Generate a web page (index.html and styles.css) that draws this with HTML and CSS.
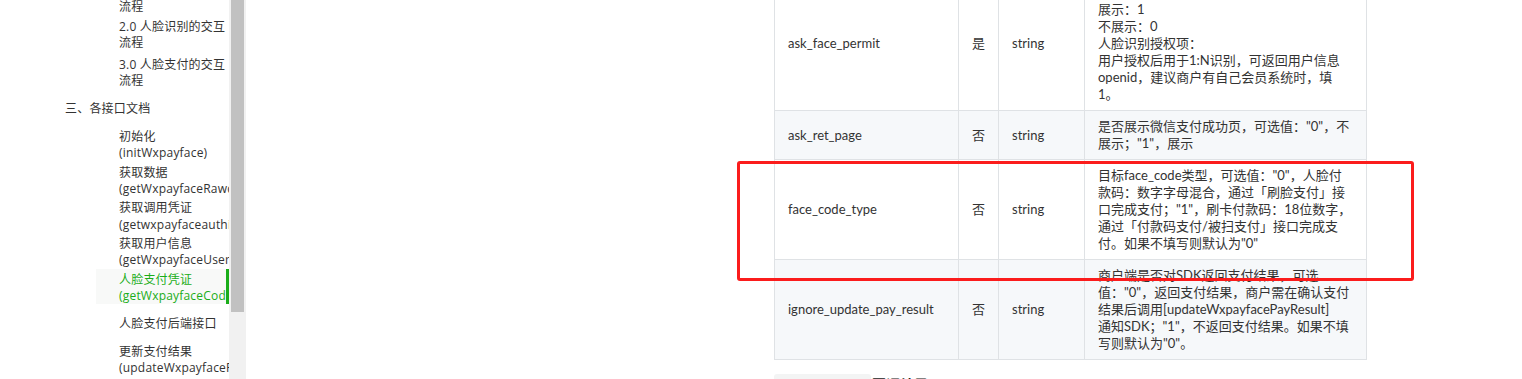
FILE: index.html
```html
<!DOCTYPE html>
<html lang="zh-CN">
<head>
<meta charset="utf-8">
<title>人脸支付接口文档</title>
<link rel="stylesheet" href="styles.css">
</head>
<body>
<div class="page">
  <aside class="sidebar">
    <nav class="side-content">
      <ul class="toc">
        <li class="toc-item sub">1.0 刷脸设备的交互<br>流程</li>
        <li class="toc-item sub">2.0 人脸识别的交互<br>流程</li>
        <li class="toc-item sub loose">3.0 人脸支付的交互<br>流程</li>
        <li class="toc-item section">三、各接口文档</li>
        <li class="toc-item sub spaced">初始化<br>(initWxpayface)</li>
        <li class="toc-item sub api">获取数据<br>(getWxpayfaceRawdata)</li>
        <li class="toc-item sub api">获取调用凭证<br>(getwxpayfaceauthinfo)</li>
        <li class="toc-item sub api">获取用户信息<br>(getWxpayfaceUserInfo)</li>
        <li class="toc-item sub active">人脸支付凭证<br>(getWxpayfaceCode)</li>
        <li class="toc-item sub spaced">人脸支付后端接口</li>
        <li class="toc-item sub spaced">更新支付结果<br>(updateWxpayfacePayResult)</li>
      </ul>
    </nav>
    <div class="scrollbar"><div class="thumb"></div></div>
  </aside>

  <main class="main">
    <div class="doc">
      <table class="params">
        <colgroup>
          <col class="c-key">
          <col class="c-req">
          <col class="c-type">
          <col class="c-desc">
        </colgroup>
        <tbody>
          <tr>
            <td class="key">ask_face_permit</td>
            <td class="req">是</td>
            <td class="type">string</td>
            <td class="desc">是否展示人脸识别授权项：<br>展示：1<br>不展示：0<br>人脸识别授权项：<br>用户授权后用于1:N识别，可返回用户信息<br>openid，建议商户有自己会员系统时，填<br>1。</td>
          </tr>
          <tr class="alt">
            <td class="key">ask_ret_page</td>
            <td class="req">否</td>
            <td class="type">string</td>
            <td class="desc">是否展示微信支付成功页，可选值："0"，不<br>展示；"1"，展示</td>
          </tr>
          <tr>
            <td class="key">face_code_type</td>
            <td class="req">否</td>
            <td class="type">string</td>
            <td class="desc">目标face_code类型，可选值："0"，人脸付<br>款码：数字字母混合，通过「刷脸支付」接<br>口完成支付；"1"，刷卡付款码：18位数字，<br>通过「付款码支付/被扫支付」接口完成支<br>付。如果不填写则默认为"0"</td>
          </tr>
          <tr class="alt">
            <td class="key">ignore_update_pay_result</td>
            <td class="req">否</td>
            <td class="type">string</td>
            <td class="desc">商户端是否对SDK返回支付结果，可选<br>值："0"，返回支付结果，商户需在确认支付<br>结果后调用[updateWxpayfacePayResult]<br>通知SDK；"1"，不返回支付结果。如果不填<br>写则默认为"0"。</td>
          </tr>
        </tbody>
      </table>
      <p class="next"><code class="inline-code">response</code>回调结果</p>
    </div>
  </main>
</div>
<div class="annotation"></div>
</body>
</html>
```

FILE: styles.css
```css
* {
  box-sizing: border-box;
}

html, body {
  margin: 0;
  padding: 0;
  background: #ffffff;
}

body {
  font-family: "Lato", "Noto Sans CJK SC", sans-serif;
  color: #333333;
  position: relative;
  height: 379px;
  overflow: hidden;
}

.page {
  display: flex;
  height: 379px;
  overflow: hidden;
}

/* ---------- sidebar ---------- */
.sidebar {
  display: flex;
  flex: 0 0 246px;
  height: 379px;
}

.side-content {
  width: 229px;
  overflow: hidden;
}

.toc {
  list-style: none;
  margin: -17.5px 0 0 0;
  padding: 0;
  font-family: "Open Sans", "Noto Sans CJK SC", sans-serif;
  font-size: 12px;
  line-height: 16.3px;
  letter-spacing: 0.2px;
  color: #333333;
}

.toc-item {
  white-space: nowrap;
  overflow: hidden;
  margin-top: 3.6px;
}

.toc-item:first-child {
  margin-top: 0;
}

.toc-item.sub {
  margin-left: 96px;
  padding-left: 23px;
}

.toc-item.loose {
  margin-top: 5.6px;
}

.toc-item.api {
  margin-top: 3px;
}

.toc-item.section {
  margin-left: 65px;
  margin-top: 11.7px;
}

.toc-item.spaced {
  margin-top: 11.7px;
}

.toc-item.active {
  color: #1aad19;
  background: #f8f9f8;
  border-right: 3px solid #1aad19;
  padding-top: 3px;
  margin-top: 0;
}

.scrollbar {
  width: 17px;
  background: #f1f1f1;
  padding: 0 2px;
}

.thumb {
  height: 312px;
  background: #c1c1c1;
}

/* ---------- main ---------- */
.main {
  flex: 1;
  padding-left: 528px;
}

.doc {
  width: 592px;
  margin-top: -24px;
}

.params {
  border-collapse: collapse;
  table-layout: fixed;
  width: 592px;
  font-size: 13px;
  line-height: 17px;
  color: #333333;
}

.c-key { width: 184px; }
.c-req { width: 40px; }
.c-type { width: 86px; }
.c-desc { width: 282px; }

.params td {
  border: 1px solid #dfe2e5;
  padding: 7px 13px 7px 13px;
  vertical-align: middle;
}

.params tr {
  background: #ffffff;
}

.params tr.alt {
  background: #f6f8fa;
}

.params td.req {
  text-align: center;
  padding-left: 0;
  padding-right: 0;
}

.params td.desc {
  white-space: nowrap;
}

.next {
  margin: 14px 0 0 0;
  font-size: 14px;
  line-height: 22px;
  color: #222222;
  font-weight: bold;
}

.inline-code {
  display: inline-block;
  width: 97px;
  background: #f3f4f4;
  border-radius: 3px;
  color: #f3f4f4;
  font-family: "Liberation Mono", monospace;
  font-weight: normal;
  vertical-align: top;
  height: 22px;
  margin-right: 1px;
}

/* ---------- annotation overlay ---------- */
.annotation {
  position: absolute;
  left: 737px;
  top: 161px;
  width: 677px;
  height: 120px;
  border: 3px solid #fb1c1c;
  border-radius: 3px;
  pointer-events: none;
}
```
